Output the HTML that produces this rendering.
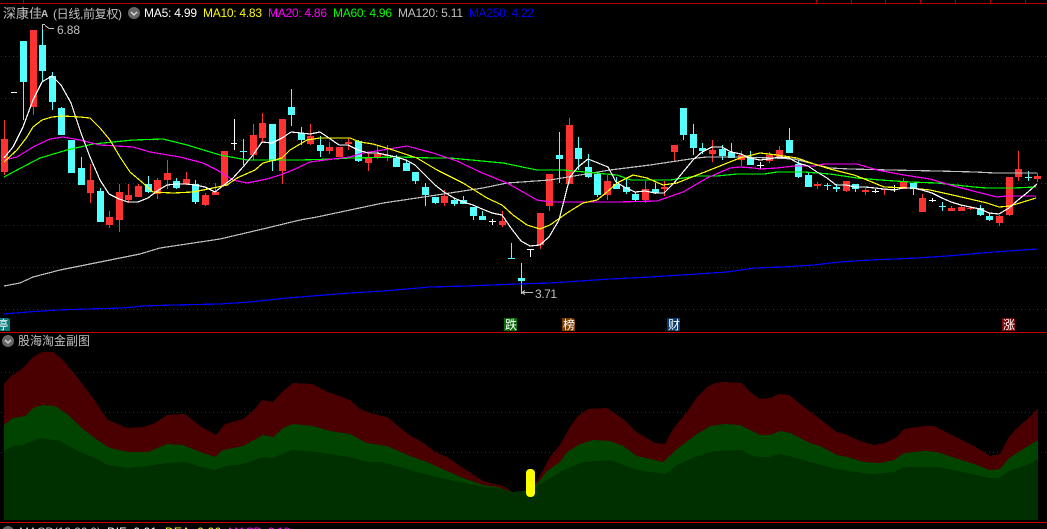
<!DOCTYPE html>
<html><head><meta charset="utf-8"><style>
html,body{margin:0;padding:0;background:#000;width:1047px;height:529px;overflow:hidden}
svg{display:block;position:absolute;left:0;top:0}
text{font-family:"Liberation Sans","Noto Sans CJK SC",sans-serif}
.l{fill:none;stroke-width:1.2}
</style></head><body>
<svg width="1047" height="529" viewBox="0 0 1047 529" xmlns="http://www.w3.org/2000/svg">
<g shape-rendering="crispEdges">
<path d="M0 3.5H1047M23.5 0v3M816.5 0v3M851.5 0v3M885.5 0v3M920.5 0v3M955.5 0v3M990.5 0v3M1025.5 0v3" stroke="#b00000" fill="none"/>
<path d="M0 332.5H1047M0 522.5H1047" stroke="#c80000" fill="none"/>
<path d="M1 56.5H1047M1 98.5H1047M1 140.5H1047M1 183.5H1047M1 225.5H1047M1 267.5H1047M1 309.5H1047M1 372.5H1047M1 412.5H1047M1 452.5H1047" stroke="#a00000" stroke-dasharray="1 3" fill="none"/>
</g>
<g shape-rendering="crispEdges">
<path fill="#4a0000" d="M4 520V384L10 377 23 368 32 358 42 352 53 352 63 360 77 377 92 397 108 420 127 428 143 427 155 423 167 415 185 414 200 426 216 435 225 424 243 419 253 411 262 400 273 402 283 391 293 383 312 384 328 392 350 400 360 409 370 413 387 417 408 434 425 444 435 452 447 457 463 468 483 481 503 486 513 492 525 492 537 481 550 457 560 445 570 427 578 416 588 409 607 408 623 419 635 431 655 443 665 444 673 429 687 412 697 397 707 387 715 383 724 382 742 383 750 392 760 399 770 398 779 394 789 395 804 407 820 419 837 432 845 434 860 441 874 445 885 443 897 437 904 429 924 426 934 426 954 436 974 446 990 456 1000 454 1009 437 1019 426 1030 417 1038 408V520Z"/>
<path fill="#004400" d="M4 520V425L13 418 25 416 33 408 43 405 55 406 67 414 83 429 100 442 110 448 128 452 148 452 167 444 183 445 200 452 215 457 223 450 243 446 263 435 273 437 283 428 293 424 313 426 330 431 350 434 367 443 387 446 410 456 427 462 447 471 463 478 483 485 497 487 513 492 525 491 537 484 547 471 560 462 567 452 580 444 593 440 610 441 623 446 637 456 663 462 677 449 697 434 710 426 724 424 740 425 760 435 770 435 780 431 790 433 810 443 820 446 837 455 847 457 864 462 880 463 894 460 904 453 924 451 937 452 964 461 977 465 989 470 1000 469 1009 458 1020 451 1038 440V520Z"/>
<path fill="#003000" d="M4 520V451L13 446 23 445 40 438 60 441 80 452 93 457 108 465 128 468 147 466 167 463 185 462 197 466 215 470 225 466 243 464 263 457 272 458 292 450 317 452 350 457 368 462 383 462 417 472 450 480 480 486 503 489 513 492 525 492 537 486 560 472 583 462 610 460 637 470 665 474 677 465 697 456 714 451 742 450 750 455 760 457 769 457 779 454 790 456 810 462 837 469 864 473 874 474 894 472 904 467 937 467 964 472 989 478 999 478 1009 471 1027 465 1038 459V520Z"/>
</g>
<rect x="526" y="469" width="9" height="28" rx="4" fill="#ffff00"/>
<g shape-rendering="crispEdges">
<path fill="#ff3232" d="M1 139h7v33h-7zM4 120h1v55h-1zM30 30h7v77h-7zM33 30h1v85h-1zM87 180h7v13h-7zM90 164h1v39h-1zM106 217h7v8h-7zM109 211h1v17h-1zM116 192h7v28h-7zM119 184h1v48h-1zM125 195h7v5h-7zM128 184h1v19h-1zM135 186h7v11h-7zM138 184h1v13h-1zM154 180h7v14h-7zM157 178h1v21h-1zM164 173h7v7h-7zM167 160h1v29h-1zM183 179h7v5h-7zM186 172h1v13h-1zM202 195h7v10h-7zM205 193h1v13h-1zM212 192h7v3h-7zM215 183h1v12h-1zM221 151h7v35h-7zM250 135h7v20h-7zM253 124h1v36h-1zM259 123h7v15h-7zM262 113h1v30h-1zM279 119h7v52h-7zM282 119h1v65h-1zM307 136h7v8h-7zM310 124h1v21h-1zM326 147h7v4h-7zM329 142h1v12h-1zM336 147h7v10h-7zM345 142h7v2h-7zM348 138h1v12h-1zM365 158h7v5h-7zM368 153h1v18h-1zM374 154h7v4h-7zM377 146h1v13h-1zM384 155h7v1h-7zM387 145h1v16h-1zM441 196h7v7h-7zM444 190h1v16h-1zM499 221h7v4h-7zM502 211h1v16h-1zM537 213h7v32h-7zM540 213h1v36h-1zM546 174h7v32h-7zM549 174h1v37h-1zM566 125h7v59h-7zM569 118h1v66h-1zM604 181h7v14h-7zM607 175h1v25h-1zM642 189h7v11h-7zM645 181h1v22h-1zM661 187h7v2h-7zM664 181h1v15h-1zM671 145h7v7h-7zM674 145h1v16h-1zM709 150h7v4h-7zM712 140h1v22h-1zM738 155h7v5h-7zM741 151h1v15h-1zM766 155h7v6h-7zM769 152h1v11h-1zM776 150h7v7h-7zM779 146h1v12h-1zM814 184h7v2h-7zM817 182h1v7h-1zM843 181h7v10h-7zM846 181h1v11h-1zM862 190h7v2h-7zM865 188h1v7h-1zM881 189h7v1h-7zM884 189h1v6h-1zM900 181h7v8h-7zM903 178h1v11h-1zM919 198h7v14h-7zM922 194h1v18h-1zM948 208h7v3h-7zM951 206h1v5h-1zM958 207h7v4h-7zM961 205h1v6h-1zM967 208h7v1h-7zM970 206h1v4h-1zM996 216h7v7h-7zM999 215h1v11h-1zM1006 177h7v38h-7zM1009 177h1v39h-1zM1015 169h7v8h-7zM1018 151h1v30h-1zM1034 176h7v3h-7zM1037 173h1v9h-1z"/>
<path fill="#54ffff" d="M20 41h7v41h-7zM23 41h1v79h-1zM39 45h7v26h-7zM42 24h1v57h-1zM49 76h7v26h-7zM52 72h1v38h-1zM58 108h7v27h-7zM61 107h1v28h-1zM68 140h7v33h-7zM78 168h7v17h-7zM81 157h1v28h-1zM97 191h7v31h-7zM100 188h1v34h-1zM145 184h7v8h-7zM148 176h1v17h-1zM173 181h7v7h-7zM176 178h1v11h-1zM192 184h7v18h-7zM195 180h1v24h-1zM240 151h7v1h-7zM243 139h1v26h-1zM269 124h7v37h-7zM272 124h1v47h-1zM288 107h7v8h-7zM291 89h1v37h-1zM298 133h7v7h-7zM301 127h1v18h-1zM317 145h7v6h-7zM320 136h1v21h-1zM355 141h7v20h-7zM358 140h1v22h-1zM393 158h7v9h-7zM396 155h1v12h-1zM403 163h7v8h-7zM406 161h1v10h-1zM412 172h7v9h-7zM415 172h1v12h-1zM422 187h7v8h-7zM425 183h1v23h-1zM432 197h7v6h-7zM435 197h1v7h-1zM451 200h7v4h-7zM454 198h1v8h-1zM460 200h7v4h-7zM463 196h1v8h-1zM470 207h7v9h-7zM473 207h1v13h-1zM479 216h7v4h-7zM482 211h1v9h-1zM508 258h7v1h-7zM511 243h1v16h-1zM518 278h7v3h-7zM521 263h1v31h-1zM556 155h7v4h-7zM559 132h1v51h-1zM575 148h7v11h-7zM578 137h1v33h-1zM585 167h7v10h-7zM588 154h1v24h-1zM594 174h7v21h-7zM597 172h1v25h-1zM613 184h7v5h-7zM616 177h1v12h-1zM623 187h7v5h-7zM626 178h1v16h-1zM632 194h7v6h-7zM635 192h1v9h-1zM652 189h7v4h-7zM655 183h1v11h-1zM680 108h7v27h-7zM683 108h1v32h-1zM690 134h7v14h-7zM693 124h1v31h-1zM699 148h7v3h-7zM702 143h1v11h-1zM719 149h7v7h-7zM722 145h1v15h-1zM728 152h7v6h-7zM731 143h1v15h-1zM747 158h7v7h-7zM750 151h1v14h-1zM786 140h7v13h-7zM789 128h1v25h-1zM795 164h7v13h-7zM798 160h1v18h-1zM805 175h7v12h-7zM808 172h1v15h-1zM824 185h7v1h-7zM827 183h1v7h-1zM833 187h7v2h-7zM836 184h1v8h-1zM852 184h7v5h-7zM855 184h1v8h-1zM910 183h7v6h-7zM913 183h1v12h-1zM939 206h7v1h-7zM942 202h1v9h-1zM977 208h7v7h-7zM980 205h1v11h-1zM986 216h7v4h-7zM989 213h1v8h-1zM1025 177h7v1h-7zM1028 171h1v10h-1z"/>
<path fill="#ffffff" d="M11 92h6v1h-6zM234 119h1v31h-1zM231 143h6v1h-6zM492 219h1v6h-1zM489 221h7v1h-7zM530 249h1v8h-1zM527 249h7v1h-7zM760 162h1v7h-1zM757 165h7v1h-7zM875 189h1v4h-1zM872 191h7v1h-7zM894 185h1v7h-1zM891 189h7v1h-7zM932 198h1v4h-1zM929 200h7v1h-7z"/>
</g>
<g shape-rendering="crispEdges">
<polyline class="l" stroke="#c0c0c0" points="4,286 20,283 33,277 60,270 110,260 140,254 160,248 200,242 220,239 267,228 300,220 317,217 350,210 383,203 417,198 450,193 483,188 507,183 550,180 610,170 650,165 697,158 707,157 740,157 774,158 794,159 830,168 850,169 890,170 937,171 975,172 995,173 1037,173"/>
<polyline class="l" stroke="#0000ff" points="4,314 28,312 57,310 87,309 123,308 143,306 173,305 220,304 250,302 287,298 350,293 383,291 430,287 467,286 517,284 550,283 610,279 650,277 697,274 727,272 755,268 784,267 814,265 840,262 870,260 917,258 947,256 994,252 1037,249"/>
<polyline class="l" stroke="#00ff00" points="4,177 17,170 40,158 67,150 93,144 133,140 163,139 187,145 220,155 247,160 300,160 333,159 350,158 400,157 433,158 450,158 503,163 537,170 563,170 617,175 631,180 670,180 697,176 717,176 737,174 764,174 777,172 804,172 830,174 857,178 880,180 910,182 937,183 974,187 987,188 1013,188 1036,187"/>
<polyline class="l" stroke="#ff00ff" points="4,160 17,157 33,147 50,139 63,137 80,140 100,145 133,147 150,152 180,157 203,163 217,170 233,180 247,183 267,179 280,175 293,170 310,162 333,159 350,157 363,153 383,150 407,146 433,153 457,161 480,172 507,183 537,200 550,202 617,202 657,201 683,192 707,178 730,168 740,167 754,168 760,169 777,168 794,166 814,166 824,164 857,164 877,170 904,175 930,179 950,185 977,192 997,197 1007,196 1036,196"/>
<polyline class="l" stroke="#ffff00" points="4,162 17,150 27,137 33,127 42,120 52,117 63,116 80,117 90,118 100,128 110,140 120,157 130,172 143,183 153,192 173,193 193,192 213,188 227,185 237,178 255,170 263,163 282,158 290,150 307,140 320,138 350,138 360,142 373,144 393,150 417,158 437,170 463,183 487,198 502,205 513,215 527,225 540,229 550,225 567,213 583,203 597,200 607,192 617,183 633,175 647,178 663,185 677,183 697,175 710,170 730,162 740,158 760,153 777,155 797,158 814,164 830,169 854,175 867,180 884,187 910,188 930,190 957,196 987,203 999,207 1010,206 1036,198"/>
<polyline class="l" stroke="#ffffff" points="4,158 13,147 23,127 33,100 42,82 52,76 61,85 71,103 81,133 90,157 100,180 109,194 119,199 128,202 138,202 148,198 157,191 167,185 176,184 186,184 195,185 205,187 215,192 224,185 233,178 243,167 253,155 262,142 272,143 282,138 291,132 301,133 310,134 320,132 329,138 339,145 348,145 358,150 368,153 377,153 387,155 396,157 406,160 415,165 425,175 435,185 444,192 454,198 463,202 473,205 482,209 492,213 502,215 511,228 521,241 530,246 540,245 549,237 559,220 570,177 578,167 588,159 598,163 608,167 616,182 626,188 635,192 645,191 655,193 664,193 674,183 693,160 702,152 712,147 722,147 731,152 741,154 750,158 760,160 769,159 779,157 789,158 798,163 808,166 817,172 827,178 836,185 846,185 855,187 865,187 875,188 884,189 894,190 903,188 913,188 922,190 932,193 942,198 951,202 961,205 970,207 980,209 989,213 999,214 1009,208 1018,200 1028,192 1037,184"/>
</g>
<!-- price flags -->
<path d="M42.5 30V24.5H45M45 25.5L49 28.5H54" stroke="#c0c0c0" fill="none" shape-rendering="crispEdges"/>
<text x="57" y="34" font-size="12" fill="#c0c0c0" textLength="23">6.88</text>
<path d="M522 292.5H533M522 292.5l3-2M522 292.5l3 2" stroke="#c0c0c0" fill="none" shape-rendering="crispEdges"/>
<text x="535" y="298" font-size="12" fill="#c0c0c0" textLength="22">3.71</text>
<!-- header -->
<text x="3" y="18" font-size="13" fill="#c0c0c0">深康佳</text>
<text x="41" y="17" font-size="10" font-weight="bold" font-family="Liberation Serif" fill="#c0c0c0" textLength="9">A</text>
<text x="53" y="18" font-size="12" fill="#c0c0c0" textLength="69">(日线,前复权)</text>
<circle cx="134" cy="13" r="6" fill="#666"/><path d="M131 12l3 3 3-3" stroke="#ddd" fill="none" stroke-width="1.3"/>
<text x="144" y="17" font-size="12" fill="#ffffff" textLength="53">MA5: 4.99</text>
<text x="203" y="17" font-size="12" fill="#ffff00" textLength="59">MA10: 4.83</text>
<text x="268" y="17" font-size="12" fill="#ff00ff" textLength="59">MA20: 4.86</text>
<text x="333" y="17" font-size="12" fill="#00ff00" textLength="59">MA60: 4.96</text>
<text x="398" y="17" font-size="12" fill="#c0c0c0" textLength="65">MA120: 5.11</text>
<text x="469" y="17" font-size="12" fill="#0000ff" textLength="65">MA250: 4.22</text>
<!-- tags -->
<g shape-rendering="crispEdges">
<path fill="#0a7a7a" d="M0 318h8l2 2v11H0z"/>
<rect x="504" y="318" width="13" height="13" fill="#0a6a0a"/>
<path fill="#7a3d00" d="M562 318h11l2 2v11h-13z"/>
<rect x="667" y="318" width="13" height="13" fill="#0a3a6a"/>
<path fill="#7a0a0a" d="M1002 318h11l2 2v11h-13z"/>
</g>
<text x="-4" y="329" font-size="12" fill="#fff">停</text>
<text x="505" y="329" font-size="12" fill="#fff">跌</text>
<text x="563" y="329" font-size="12" fill="#fff">榜</text>
<text x="668" y="329" font-size="12" fill="#fff">财</text>
<text x="1003" y="329" font-size="12" fill="#fff">涨</text>
<!-- sub-panel header -->
<circle cx="8" cy="341" r="6" fill="#666"/><path d="M5 340l3 3 3-3" stroke="#ddd" fill="none" stroke-width="1.3"/>
<text x="18" y="345" font-size="12" fill="#c0c0c0">股海淘金副图</text>
<!-- bottom MACD row -->
<circle cx="8" cy="532" r="6" fill="#666"/>
<text x="19" y="536" font-size="12" fill="#c0c0c0" textLength="82">MACD(12,26,9)</text>
<text x="107" y="536" font-size="12" fill="#ffffff" textLength="50">DIF: 0.01</text>
<text x="165" y="536" font-size="12" fill="#ffff00" textLength="56">DEA: 0.06</text>
<text x="228" y="536" font-size="12" fill="#ff00ff" textLength="62">MACD: 0.12</text>
</svg>
</body></html>
